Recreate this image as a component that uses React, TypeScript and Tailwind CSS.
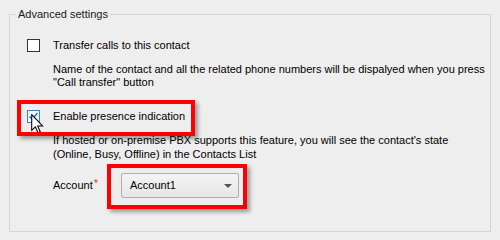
import React from 'react';

const Checkbox: React.FC<{ checked?: boolean; hover?: boolean }> = ({ checked, hover }) => (
  <div
    className={`w-[13px] h-[13px] shrink-0 border ${
      hover ? 'border-[#3c7fb1] bg-[#eef6fd]' : 'border-[#333333] bg-white'
    } flex items-center justify-center`}
  >
    {checked && (
      <svg width="11" height="11" viewBox="0 0 11 11">
        <path d="M1.5 5.5 L4.2 8.2 L9.5 2" fill="none" stroke="#1d70c2" strokeWidth="1.3" />
      </svg>
    )}
  </div>
);

const Cursor: React.FC = () => (
  <svg width="13" height="20" viewBox="0 0 12 19" className="absolute left-[4px] top-[4px]">
    <path
      d="M0.5 0.5 L0.5 15.5 L4 12.2 L6.5 17.8 L8.6 16.9 L6.2 11.4 L10.8 11.4 Z"
      fill="#ffffff"
      stroke="#000000"
      strokeWidth="1"
      strokeLinejoin="miter"
    />
  </svg>
);

export default function App() {
  return (
    <div className="w-[500px] h-[240px] bg-[#eeeeee] pt-[8px] px-[9px] text-[11px] leading-[13px] text-black font-['Liberation_Sans',Arial,sans-serif]">
      <fieldset className="h-[224px] border border-[#d5d5d5] p-0 m-0 min-w-0">
        <legend className="ml-[6px] px-[2px] leading-[12px] text-[#1a1a1a]">Advanced settings</legend>

        <div className="pl-[17px] pt-[19px] whitespace-nowrap">
          {/* Transfer calls */}
          <div className="flex items-center gap-[13px] h-[13px]">
            <Checkbox />
            <span>Transfer calls to this contact</span>
          </div>
          <div className="pl-[26px] mt-[11px] leading-[13px]">
            <p>Name of the contact and all the related phone numbers will be dispalyed when you press</p>
            <p>"Call transfer" button</p>
          </div>

          {/* Presence */}
          <div className="relative mt-[21px] flex items-center gap-[13px] h-[13px]">
            <div className="relative">
              <Checkbox checked hover />
              <Cursor />
            </div>
            <span>Enable presence indication</span>
            <div className="absolute left-[-10px] top-[-10px] w-[178px] h-[36px] border-[4px] border-[#ff0000] shadow-[3px_3px_4px_rgba(0,0,0,0.35)] pointer-events-none" />
          </div>
          <div className="pl-[26px] mt-[10px] leading-[14px]">
            <p>If hosted or on-premise PBX supports this feature, you will see the contact's state</p>
            <p>(Online, Busy, Offline) in the Contacts List</p>
          </div>

          {/* Account */}
          <div className="pl-[26px] mt-[12px] flex items-center h-[25px]">
            <span className="w-[68px]">
              Account<span className="text-[#e8312f] relative top-[-2px] ml-[1px]">*</span>
            </span>
            <div className="relative">
              <div className="w-[118px] h-[25px] border border-[#adadad] rounded-[2px] bg-gradient-to-b from-[#f4f4f4] to-[#e6e6e6] flex items-center justify-between pl-[8px] pr-[6px]">
                <span>Account1</span>
                <svg width="8" height="4" viewBox="0 0 8 4">
                  <path d="M0 0 L8 0 L4 4 Z" fill="#555555" />
                </svg>
              </div>
              <div className="absolute left-[-14px] top-[-9px] w-[140px] h-[45px] border-[4px] border-[#ff0000] shadow-[3px_3px_4px_rgba(0,0,0,0.35)] pointer-events-none" />
            </div>
          </div>
        </div>
      </fieldset>
    </div>
  );
}
